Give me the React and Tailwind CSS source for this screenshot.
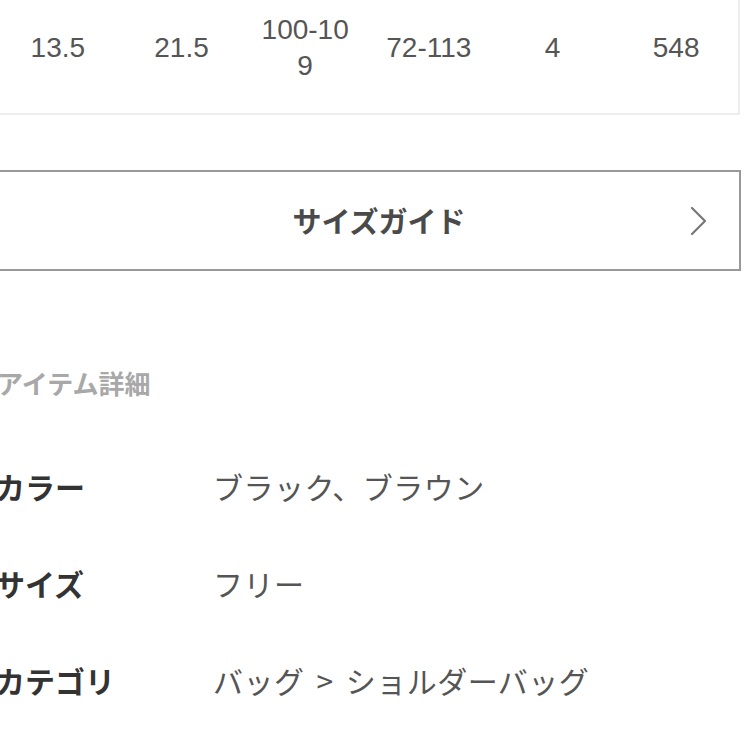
import React from "react";

const sizes = ["13.5", "21.5", "100-109", "72-113", "4", "548"];

const details = [
    { label: "カラー", value: ["ブラック、ブラウン"] },
    { label: "サイズ", value: ["フリー"] },
    { label: "カテゴリ", value: ["バッグ", "ショルダーバッグ"] },
];

const ChevronRight = () => (
    <svg width="18" height="30" viewBox="0 0 18 30" fill="none" className="shrink-0">
        <path d="M2 2 L15 15 L2 28" stroke="#777" strokeWidth="2.2" strokeLinecap="round" strokeLinejoin="round" />
    </svg>
);

const App = () => {
    return (
        <div className="w-[748px] h-[748px] overflow-hidden bg-white" style={{ fontFamily: '"Liberation Sans", "Noto Sans CJK JP", sans-serif' }}>
            <div className="-ml-[4px] w-[744px] bg-white border-b-2 border-r-2 border-[#eeeeee] pt-[12px] pb-[29px]">
                <div className="grid grid-cols-6">
                    {sizes.map((s) => (
                        <div key={s} className="px-[12px] flex items-center justify-center text-center text-[28px] leading-[36px] text-[#555] break-all">
                            {s}
                        </div>
                    ))}
                </div>
            </div>

            <button className="mt-[55px] -ml-[6px] w-[747px] h-[101px] border-2 border-[#999] bg-white flex items-center pl-[72px] pr-[31px]">
                <span className="flex-1 text-center text-[29px] font-bold text-[#4a4a4a]" style={{ fontFamily: '"Noto Sans CJK JP", sans-serif' }}>
                    サイズガイド
                </span>
                <ChevronRight />
            </button>

            <div className="pt-[94px] -ml-[3px]" style={{ fontFamily: '"Noto Sans CJK JP", sans-serif' }}>
                <h3 className="text-[26px] leading-[36px] font-bold text-[#a8a8a8]">アイテム詳細</h3>
                <dl className="mt-[64px] -ml-[2px] flex flex-col gap-[54px]">
                    {details.map((d) => (
                        <div key={d.label} className="flex items-center h-[43px]">
                            <dt className="w-[218px] shrink-0 text-[30px] font-bold text-[#333]">{d.label}</dt>
                            <dd className="flex items-center text-[30px] tracking-[0.5px] text-[#555]">
                                {d.value.map((v, i) => (
                                    <React.Fragment key={v}>
                                        {i > 0 && <span className="mx-[12px]">&gt;</span>}
                                        <span>{v}</span>
                                    </React.Fragment>
                                ))}
                            </dd>
                        </div>
                    ))}
                </dl>
            </div>
        </div>
    );
};

export default App;
